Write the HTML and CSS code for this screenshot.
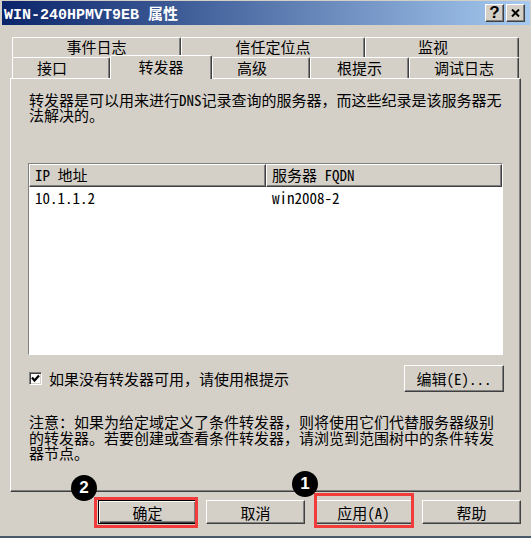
FILE: index.html
```html
<!DOCTYPE html>
<html lang="zh-CN">
<head>
    <meta charset="UTF-8">
    <title>WIN-240HPMVT9EB 属性</title>
    <link rel="stylesheet" href="styles.css">
</head>
<body>
    <div class="window">
        <div class="titlebar">
            <span class="title">WIN-240HPMVT9EB 属性</span>
            <div class="title-buttons">
                <span class="tbtn help">?</span>
                <span class="tbtn close">
                    <svg width="9" height="8" viewBox="0 0 9 8"><path d="M1 0.5 L8 7.5 M8 0.5 L1 7.5" stroke="#000" stroke-width="2"/></svg>
                </span>
            </div>
        </div>

        <div class="tabs">
            <div class="tab-row back">
                <div class="tab" style="width: 169px">事件日志</div>
                <div class="tab" style="width: 184px">信任定位点</div>
                <div class="tab narrow" style="width: 154px">监视</div>
            </div>
            <div class="tab-row front">
                <div class="tab narrow" style="width: 98px">接口</div>
                <div class="tab active" style="width: 102px">转发器</div>
                <div class="tab narrow" style="width: 98px">高级</div>
                <div class="tab" style="width: 99px">根提示</div>
                <div class="tab" style="width: 110px">调试日志</div>
            </div>
        </div>

        <div class="panel">
            <p class="desc">转发器是可以用来进行DNS记录查询的服务器，而这些纪录是该服务器无<br>法解决的。</p>

            <div class="listview">
                <div class="list-head">
                    <div class="col col-ip">IP 地址</div>
                    <div class="col col-fqdn">服务器 FQDN</div>
                </div>
                <div class="list-row">
                    <span class="cell col-ip">10.1.1.2</span>
                    <span class="cell col-fqdn">win2008-2</span>
                </div>
            </div>

            <div class="options">
                <label class="check">
                    <span class="box">
                        <svg width="9" height="9" viewBox="0 0 9 9"><path d="M1 3.5 L3.5 6.5 L8 1.5" fill="none" stroke="#000" stroke-width="2.2"/></svg>
                    </span>
                    如果没有转发器可用，请使用根提示
                </label>
                <button class="btn edit">编辑(E)...</button>
            </div>

            <p class="note">注意：如果为给定域定义了条件转发器，则将使用它们代替服务器级别<br>的转发器。若要创建或查看条件转发器，请浏览到范围树中的条件转发<br>器节点。</p>
        </div>

        <div class="actions">
            <button class="btn default">确定</button>
            <button class="btn">取消</button>
            <button class="btn">应用(A)</button>
            <button class="btn">帮助</button>
        </div>

        <!-- annotations drawn over the dialog -->
        <div class="mark-box box-ok"></div>
        <div class="mark-box box-apply"></div>
        <div class="step step-2">2</div>
        <div class="step step-1">1</div>
    </div>
</body>
</html>
```

FILE: styles.css
```css
:root {
    --face: #d4d0c8;
    --light: #ffffff;
    --shadow: #808080;
    --dark: #404040;
    --mark: #f23b3b;
}

body {
    margin: 0;
    background-color: #4b5a6b;
    font-family: "Noto Sans Mono CJK SC", "Noto Sans CJK SC", sans-serif;
    font-size: 15px;
    color: #000;
}

.window {
    position: relative;
    width: 531px;
    height: 536px;
    background-color: var(--face);
    overflow: hidden;
}

/* title bar */
.titlebar {
    display: flex;
    align-items: center;
    justify-content: space-between;
    height: 24px;
    margin: 1px 1px 0 2px;
    padding: 0 5px 0 2px;
    background: linear-gradient(to right, #0a246a, #a6caf0);
    color: var(--light);
}

.title {
    font-family: "Liberation Mono", "Noto Sans CJK SC", monospace;
    font-weight: bold;
    font-size: 15px;
    white-space: nowrap;
}

.title-buttons {
    display: flex;
    gap: 2px;
}

.tbtn {
    box-sizing: border-box;
    display: flex;
    align-items: center;
    justify-content: center;
    width: 19px;
    height: 18px;
    background-color: var(--face);
    border: 1px solid;
    border-color: var(--light) var(--dark) var(--dark) var(--light);
    box-shadow: inset -1px -1px var(--shadow);
    color: #000;
}

.tbtn.help {
    font-family: "Liberation Sans", sans-serif;
    font-weight: bold;
    font-size: 17px;
    line-height: 16px;
}

/* tabs */
.tabs {
    padding: 12px 0 0 12px;
}

.tab-row {
    display: flex;
    height: 20px;
}

.tab-row.front {
    height: 21px;
}

.tab {
    box-sizing: border-box;
    height: 100%;
    border: 1px solid;
    border-bottom: none;
    border-color: var(--light) var(--dark) transparent var(--light);
    border-radius: 2px 2px 0 0;
    box-shadow: inset -1px 0 var(--shadow);
    text-align: center;
    line-height: 18px;
    white-space: nowrap;
}

.tab-row.front .tab {
    line-height: 19px;
}

.tab.narrow {
    padding-right: 18px;
}

.tab-row.front .tab.active {
    position: relative;
    z-index: 1;
    align-self: flex-start;
    height: 24px;
    margin-top: -2px;
    padding-top: 1px;
    background-color: var(--face);
}

/* page body */
.panel {
    box-sizing: border-box;
    height: 414px;
    margin: 0 10px;
    padding: 13px 16px 0 18px;
    border: 1px solid;
    border-color: var(--light) var(--dark) var(--dark) var(--light);
    box-shadow: inset -1px -1px var(--shadow);
}

.desc,
.note {
    margin: 0;
    line-height: 15px;
    white-space: nowrap;
}

.note {
    margin-top: 22px;
    line-height: 15.5px;
}

.listview {
    box-sizing: border-box;
    width: 475px;
    height: 192px;
    margin: 41px 0 0 -1px;
    background-color: var(--light);
    border: 1px solid;
    border-color: var(--shadow) var(--light) var(--light) var(--shadow);
}

.list-head {
    display: flex;
    height: 23px;
}

.col {
    box-sizing: border-box;
    padding-left: 5px;
    border: 1px solid;
    border-color: var(--light) var(--dark) var(--dark) var(--light);
    box-shadow: inset -1px -1px var(--shadow);
    background-color: var(--face);
    line-height: 20px;
    white-space: nowrap;
}

.col-ip {
    width: 237px;
}

.col-fqdn {
    flex: 1;
}

.list-row {
    display: flex;
    padding-top: 2px;
    line-height: 18px;
}

.cell {
    box-sizing: border-box;
    padding-left: 6px;
}

.options {
    display: flex;
    align-items: center;
    justify-content: space-between;
    height: 27px;
    margin-top: 10px;
}

.check {
    display: flex;
    align-items: center;
    gap: 7px;
}

.box {
    box-sizing: border-box;
    display: flex;
    align-items: center;
    justify-content: center;
    width: 13px;
    height: 13px;
    background-color: var(--light);
    border: 1px solid;
    border-color: var(--shadow) var(--light) var(--light) var(--shadow);
    box-shadow: inset 1px 1px var(--dark), inset -1px -1px var(--face);
}

/* buttons */
.btn {
    box-sizing: border-box;
    width: 99px;
    height: 24px;
    padding: 0;
    font: inherit;
    color: #000;
    background-color: var(--face);
    border: 1px solid;
    border-color: var(--light) var(--dark) var(--dark) var(--light);
    box-shadow: inset -1px -1px var(--shadow);
}

.btn.edit {
    width: 100px;
    height: 27px;
}

.btn.default {
    border-color: #000;
    box-shadow: inset 1px 1px var(--light), inset -1px -1px var(--dark), inset -2px -2px var(--shadow);
}

.actions {
    display: flex;
    justify-content: flex-end;
    gap: 9px;
    padding: 8px 10px 0 0;
}

/* red boxes and numbered steps */
.mark-box {
    position: absolute;
    box-sizing: border-box;
    border: 3px solid var(--mark);
}

.box-ok {
    left: 94px;
    top: 497px;
    width: 104px;
    height: 31px;
}

.box-apply {
    left: 314px;
    top: 493px;
    width: 100px;
    height: 35px;
}

.step {
    position: absolute;
    width: 26px;
    height: 26px;
    border-radius: 50%;
    background-color: #000;
    color: var(--light);
    font-family: "Liberation Sans", sans-serif;
    font-weight: bold;
    font-size: 17px;
    line-height: 26px;
    text-align: center;
}

.step-2 {
    left: 71px;
    top: 475px;
}

.step-1 {
    left: 292px;
    top: 471px;
}
```
